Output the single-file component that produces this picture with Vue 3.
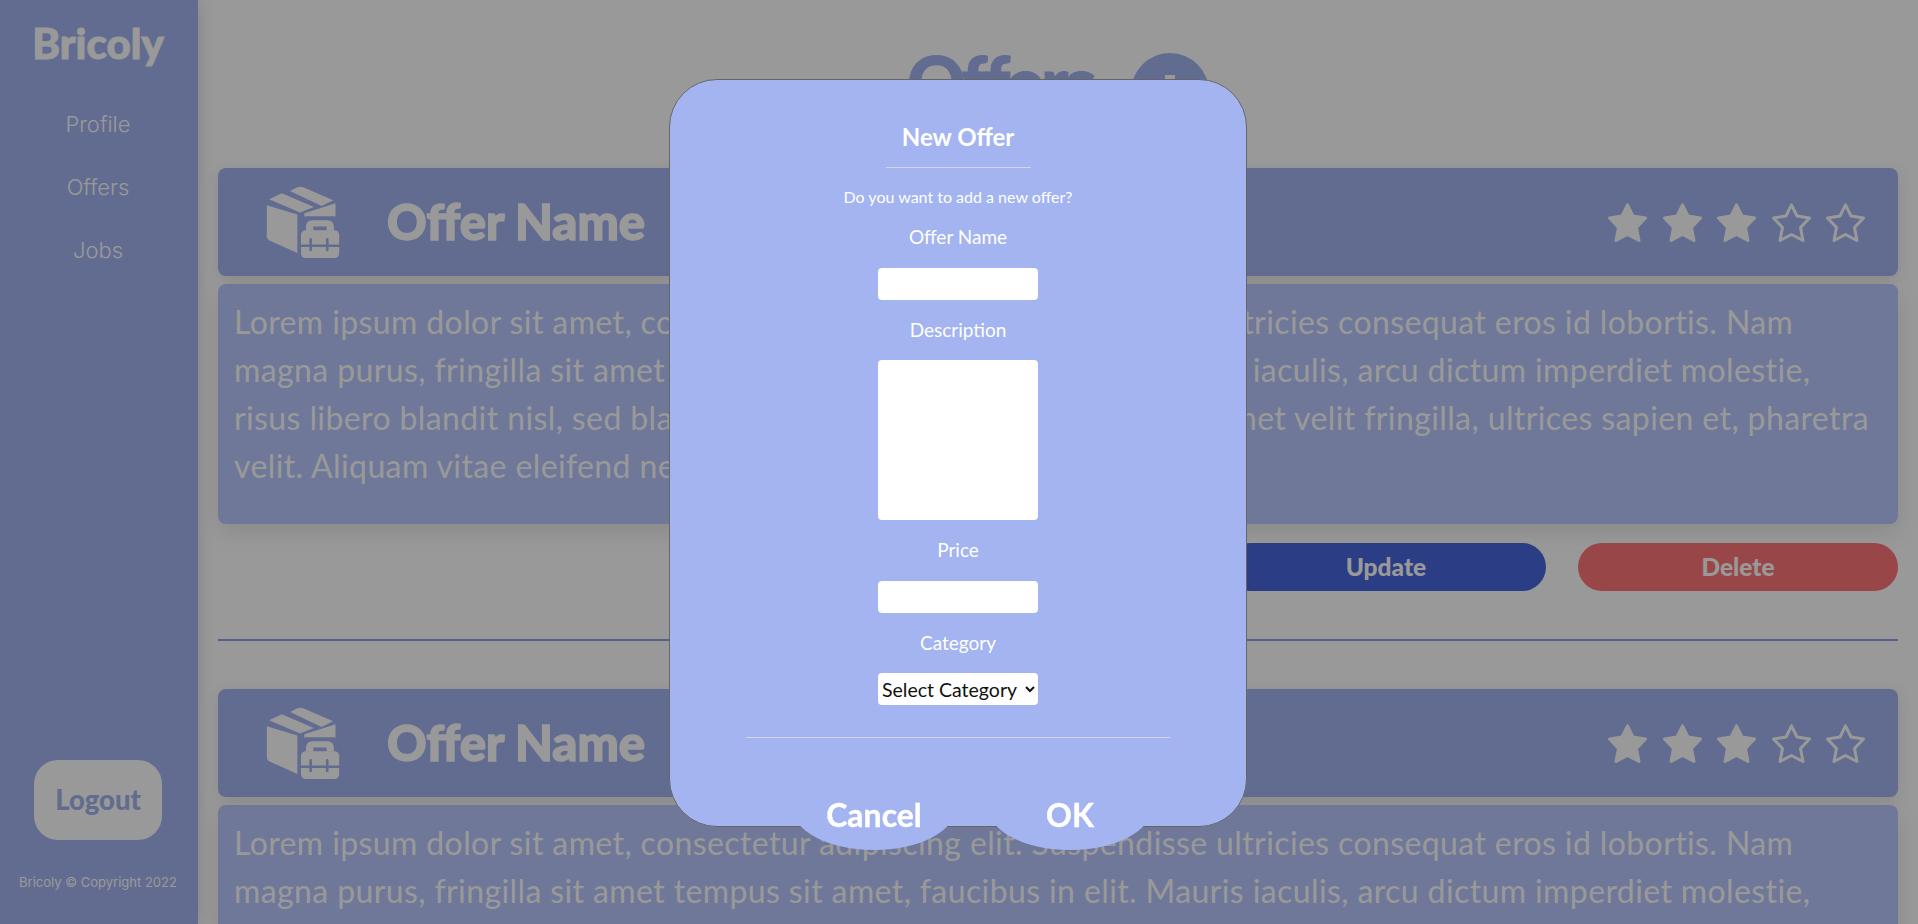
<template>
  <div class="layout">
    <aside class="sidebar">
      <div class="brand">Bricoly</div>
      <nav class="nav">
        <a v-for="link in links" :key="link" class="nav-link">{{ link }}</a>
      </nav>
      <button class="logout">Logout</button>
      <p class="copyright">Bricoly © Copyright 2022</p>
    </aside>

    <main class="content">
      <header class="page-head">
        <h1 class="page-title">Offers</h1>
        <button class="add-btn">
          <svg viewBox="0 0 78 78" width="78" height="78">
            <path d="M39 22v34M22 39h34" stroke="#fff" stroke-width="10" />
          </svg>
        </button>
      </header>

      <section v-for="offer in offers" :key="offer" class="offer">
        <div class="offer-head">
          <svg class="offer-icon" viewBox="78 45 222 220" width="74" height="73">
            <path d="M80 103 172 131V247L88 209Q80 205 80 197Z" fill="#fff" />
            <path d="M87 85 125 67 222 108 180 125Z" fill="#fff" />
            <path d="M150 60 172 49Q180 45 190 49L280 88 245 105Z" fill="#fff" />
            <path d="M193 127 287 97V175H193Z" fill="#fff" />
            <rect x="176" y="136" width="129" height="133" rx="24" fill="#a3b4f1" />
            <path d="M198 180V168Q198 148 218 148H262Q282 148 282 168V180ZM220 167V180H260V167Z" fill="#fff" fill-rule="evenodd" />
            <rect x="183" y="178" width="115" height="84" rx="14" fill="#fff" />
            <path d="M183 225H298M212 206V238M262 206V238" stroke="#a3b4f1" stroke-width="8" stroke-linecap="round" />
          </svg>
          <h2 class="offer-name">Offer Name</h2>
          <div class="stars">
            <svg v-for="n in 5" :key="n" class="star" viewBox="0 0 39 39" width="39" height="39">
              <polygon
                points="19.5,1.8 25,13 37.5,15 28.5,24.5 31,37.5 19.5,31.5 8,37.5 10.5,24.5 1.5,15 14,13"
                :fill="n <= 3 ? '#fff' : 'none'"
                stroke="#fff"
                stroke-width="3"
                stroke-linejoin="round"
              />
            </svg>
          </div>
        </div>
        <div class="offer-body">
          <span v-for="line in lorem" :key="line" class="line">{{ line }}</span>
        </div>
        <div class="offer-actions">
          <button class="action update">Update</button>
          <button class="action delete">Delete</button>
        </div>
        <hr class="offer-sep" />
      </section>
    </main>

    <div class="overlay">
      <div class="modal">
        <h2 class="modal-title">New Offer</h2>
        <hr class="modal-sep short" />
        <p class="modal-sub">Do you want to add a new offer?</p>
        <label class="field-label">Offer Name</label>
        <input class="field" type="text" />
        <label class="field-label">Description</label>
        <textarea class="field area"></textarea>
        <label class="field-label">Price</label>
        <input class="field" type="text" />
        <label class="field-label">Category</label>
        <select class="field select">
          <option>Select Category</option>
        </select>
        <hr class="modal-sep wide" />
        <div class="modal-actions">
          <button class="modal-btn">Cancel</button>
          <button class="modal-btn">OK</button>
        </div>
      </div>
    </div>
  </div>
</template>

<script setup>
const links = ['Profile', 'Offers', 'Jobs'];
const offers = [1, 2];
const lorem = [
  'Lorem ipsum dolor sit amet, consectetur adipiscing elit. Suspendisse ultricies consequat eros id lobortis. Nam',
  'magna purus, fringilla sit amet tempus sit amet, faucibus in elit. Mauris iaculis, arcu dictum imperdiet molestie,',
  'risus libero blandit nisl, sed blandit lorem, tempo sit amet. Donec sit amet velit fringilla, ultrices sapien et, pharetra',
  'velit. Aliquam vitae eleifend neque.'
];
</script>

<style>
body {
  overflow: hidden;
}
</style>

<style scoped>
.layout {
  display: flex;
  height: 924px;
  overflow: hidden;
  background: #fff;
  font-family: 'Lato', sans-serif;
}

.sidebar {
  width: 198px;
  flex-shrink: 0;
  height: 100%;
  box-sizing: border-box;
  padding-right: 2px;
  display: flex;
  flex-direction: column;
  align-items: center;
  background: #a3b4f1;
  color: #fff;
  box-shadow: 0 0 16px rgba(0, 0, 0, 0.15);
}

.brand {
  margin-top: 15px;
  font-weight: 900;
  font-size: 42px;
  line-height: 56px;
  -webkit-text-stroke: 1px #fff;
}

.nav {
  margin-top: 38px;
  display: flex;
  flex-direction: column;
  align-items: center;
  gap: 33px;
}

.nav-link {
  font-family: 'Inter', sans-serif;
  font-weight: 300;
  font-size: 22px;
  line-height: 30px;
}

.logout {
  margin-top: auto;
  width: 128px;
  height: 80px;
  padding: 0 0 2px;
  border: none;
  border-radius: 24px;
  background: #fff;
  color: #a3b4f1;
  font-family: 'Lato', sans-serif;
  font-weight: 900;
  font-size: 27.5px;
}

.copyright {
  margin: 34px 0 34px;
  font-family: 'Inter', sans-serif;
  font-size: 13px;
  line-height: 16px;
}

.content {
  flex: 1;
  min-width: 0;
  padding: 0 20px;
}

.page-head {
  height: 168px;
  padding-top: 53px;
  box-sizing: border-box;
  display: flex;
  justify-content: center;
  align-items: flex-start;
  gap: 38px;
}

.page-title {
  margin: -11px 0 0;
  font-weight: 900;
  font-size: 72px;
  letter-spacing: -3.5px;
  line-height: 78px;
  color: #a3b4f1;
  -webkit-text-stroke: 1px #a3b4f1;
}

.add-btn {
  width: 78px;
  height: 78px;
  padding: 0;
  border: none;
  border-radius: 50%;
  background: #a3b4f1;
}

.offer-head {
  height: 108px;
  display: flex;
  align-items: center;
  padding: 0 33px 0 48px;
  border-radius: 8px;
  background: #a3b4f1;
  color: #fff;
  box-shadow: 0 4px 16px rgba(0, 0, 0, 0.1);
}

.offer-icon {
  flex-shrink: 0;
}

.offer-name {
  margin: 0 0 2px 47px;
  font-weight: 900;
  font-size: 49px;
  line-height: 60px;
  -webkit-text-stroke: 1.5px #fff;
}

.stars {
  margin-left: auto;
  display: flex;
  gap: 15.5px;
}

.offer-body {
  margin-top: 8px;
  height: 240px;
  box-sizing: border-box;
  padding: 14px 16px;
  border-radius: 8px;
  background: #b9c8fd;
  color: #fff;
  font-size: 32px;
  letter-spacing: 0.39px;
  line-height: 48px;
  box-shadow: 0 8px 24px rgba(0, 0, 0, 0.1);
}

.line {
  display: block;
  white-space: nowrap;
}

.offer-actions {
  margin-top: 19px;
  display: flex;
  justify-content: flex-end;
  gap: 32px;
}

.action {
  width: 320px;
  height: 48px;
  padding: 0 0 2px;
  border: none;
  border-radius: 24px;
  color: #fff;
  font-family: 'Lato', sans-serif;
  font-weight: 900;
  font-size: 24.5px;
}

.update {
  background: #4666de;
}

.delete {
  background: #ff7578;
}

.offer-sep {
  margin: 48px 0;
  height: 2px;
  border: none;
  background: #8f9de6;
}

.overlay {
  position: fixed;
  inset: 0;
  display: flex;
  justify-content: center;
  align-items: flex-start;
  padding: 79px 2px 0 0;
  background: rgba(0, 0, 0, 0.4);
}

.modal {
  width: 578px;
  height: 748px;
  box-sizing: border-box;
  padding-top: 41px;
  display: flex;
  flex-direction: column;
  align-items: center;
  border: 1px solid #666;
  border-radius: 48px;
  background: #a3b4f1;
  color: #fff;
}

.modal > * {
  flex-shrink: 0;
}

.modal-title {
  margin: 0;
  font-weight: 700;
  font-size: 24px;
  line-height: 32px;
}

.modal-sep {
  margin: 0;
  height: 1px;
  border: none;
  background: #d3d6e0;
}

.short {
  margin-top: 14px;
  width: 145px;
}

.wide {
  margin-top: 32px;
  width: 424px;
}

.modal-sub {
  margin: 19px 0 0;
  font-size: 16px;
  line-height: 20px;
}

.field-label {
  margin-top: 18px;
  font-size: 19px;
  line-height: 23.5px;
}

.field {
  display: block;
  margin-top: 19px;
  width: 160px;
  height: 32px;
  box-sizing: border-box;
  padding: 0 4px;
  border: none;
  border-radius: 4px;
  background: #fff;
  font-family: 'Lato', sans-serif;
}

.area {
  height: 160px;
  resize: none;
}

.select {
  padding: 0;
  font-size: 19.5px;
  color: #111;
}

.modal-actions {
  margin-top: 26px;
  padding-left: 28px;
  display: flex;
  gap: 32px;
}

.modal-btn {
  width: 164px;
  height: 86px;
  padding: 14px 0 0;
  border: none;
  border-radius: 50%;
  background: #a3b4f1;
  color: #fff;
  font-family: 'Lato', sans-serif;
  font-weight: 700;
  font-size: 32px;
  -webkit-text-stroke: 0.4px #fff;
}
</style>
